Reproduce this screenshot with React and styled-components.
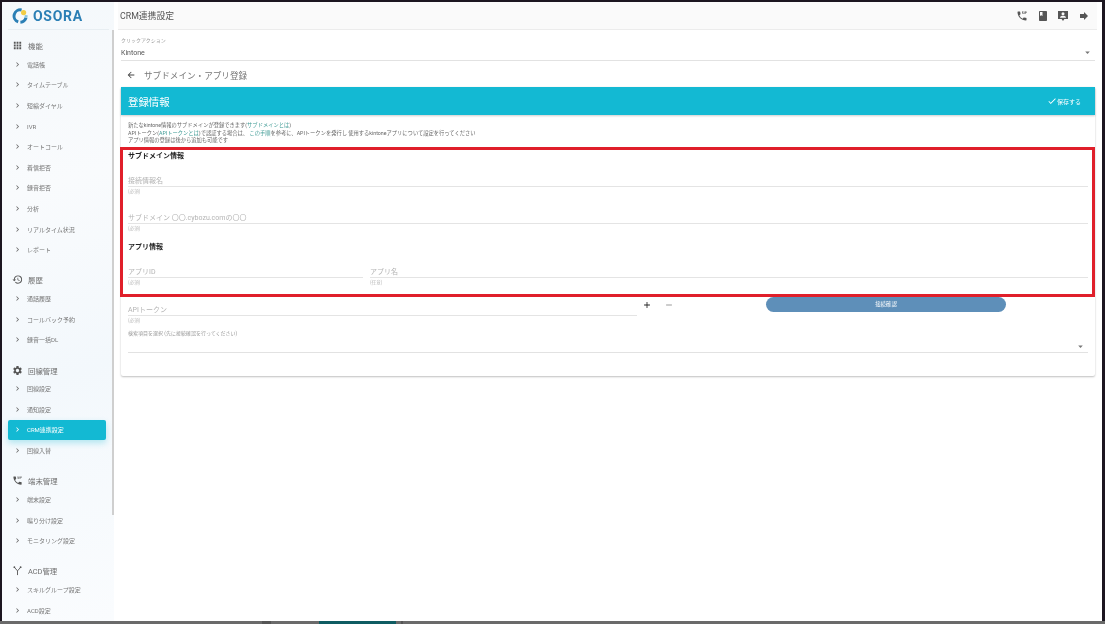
import React from 'react'
import styled, { createGlobalStyle } from 'styled-components'
import {
  MdApps, MdArrowBack, MdArrowDropDown, MdAdd, MdBook, MdCheck, MdChevronRight,
  MdDialerSip, MdForward, MdHistory, MdRemove, MdSettings,
} from 'react-icons/md'

function AcdIcon() {
  return (
    <svg viewBox="0 0 12 12" fill="none" stroke="#555" strokeWidth="1">
      <path d="M3 3 6 6.4 9 3M6 6.4V11" />
      <circle cx="2.6" cy="2.4" r="1" fill="#555" stroke="none" />
      <circle cx="9.4" cy="2.4" r="1" fill="#555" stroke="none" />
    </svg>
  )
}

const groups = [
  { title: '機能', icon: <MdApps />, items: ['電話帳', 'タイムテーブル', '短縮ダイヤル', 'IVR', 'オートコール', '着信拒否', '録音拒否', '分析', 'リアルタイム状況', 'レポート'] },
  { title: '履歴', icon: <MdHistory />, items: ['通話履歴', 'コールバック予約', '録音一括DL'] },
  { title: '回線管理', icon: <MdSettings />, items: ['回線設定', '通知設定', 'CRM連携設定', '回線入替'] },
  { title: '端末管理', icon: <MdDialerSip />, items: ['端末設定', '鳴り分け設定', 'モニタリング設定'] },
  { title: 'ACD管理', icon: <AcdIcon />, items: ['スキルグループ設定', 'ACD設定'] },
]

function Logo() {
  return (
    <svg width="16" height="16" viewBox="0 0 16 16">
      <path d="M9.6 2A6.2 6.2 0 0 0 6.2 13.9" fill="none" stroke="#2b7fb5" strokeWidth="3" />
      <path d="M14 9.6A6.2 6.2 0 0 1 8.4 14.2" fill="none" stroke="#2b7fb5" strokeWidth="3" />
      <path d="M14.2 7.2 14 9.6" fill="none" stroke="#8cc7e0" strokeWidth="3" />
      <circle cx="11.6" cy="4.6" r="2.6" fill="#f2cd45" />
    </svg>
  )
}

function ContactIcon() {
  return (
    <svg width="12" height="12" viewBox="0 0 12 12" fill="#555">
      <path d="M1 1h10v8H7.4L6 11 4.6 9H1z" />
      <circle cx="6" cy="3.8" r="1.5" fill="#fafafa" />
      <path d="M3 7.8c0-1.4 1.6-2 3-2s3 .6 3 2z" fill="#fafafa" />
    </svg>
  )
}

function Field({ label, hint }) {
  return (
    <FieldBox>
      <Placeholder>{label}</Placeholder>
      <Hint>{hint}</Hint>
    </FieldBox>
  )
}

function App() {
  return (
    <Screen>
      <GlobalStyle />
      <Body>
        <Sidebar>
          <Brand>
            <Logo />
            <BrandName>OSORA</BrandName>
          </Brand>
          <Nav>
            {groups.map((group) => (
              <Group key={group.title}>
                <GroupTitle>
                  {group.icon}
                  <span>{group.title}</span>
                </GroupTitle>
                {group.items.map((item) => (
                  <NavItem key={item} $active={item === 'CRM連携設定'}>
                    <MdChevronRight />
                    <span>{item}</span>
                  </NavItem>
                ))}
              </Group>
            ))}
          </Nav>
          <Scrollbar />
        </Sidebar>
        <Main>
          <TopBar>
            <PageTitle>CRM連携設定</PageTitle>
            <TopIcons>
              <MdDialerSip />
              <MdBook />
              <ContactIcon />
              <MdForward />
            </TopIcons>
          </TopBar>
          <Content>
            <ActionSelect>
              <SmallLabel>クリックアクション</SmallLabel>
              <SelectValue>
                Kintone
                <MdArrowDropDown />
              </SelectValue>
            </ActionSelect>
            <BackRow>
              <MdArrowBack />
              <span>サブドメイン・アプリ登録</span>
            </BackRow>
            <Card>
              <CardHeader>
                <CardTitle>登録情報</CardTitle>
                <SaveButton>
                  <MdCheck />
                  保存する
                </SaveButton>
              </CardHeader>
              <CardBody>
                <Notes>
                  <p>新たなkintone情報のサブドメインが登録できます(<NoteLink>サブドメインとは</NoteLink>)</p>
                  <p>APIトークン(<NoteLink>APIトークンとは</NoteLink>)で認証する場合は、 <NoteLink>この手順</NoteLink>を参考に、APIトークンを発行し 使用するkintoneアプリについて設定を行ってください</p>
                  <p>アプリ情報の登録は後から追加も可能です</p>
                </Notes>
                <SectionTitle>サブドメイン情報</SectionTitle>
                <FieldStack>
                  <Field label="接続情報名" hint="(必須)" />
                  <Field label="サブドメイン 〇〇.cybozu.comの〇〇" hint="(必須)" />
                </FieldStack>
                <SectionTitle $second>アプリ情報</SectionTitle>
                <AppRow>
                  <Field label="アプリID" hint="(必須)" />
                  <Field label="アプリ名" hint="(任意)" />
                </AppRow>
                <TokenRow>
                  <TokenField>
                    <Field label="APIトークン" hint="(必須)" />
                  </TokenField>
                  <TokenButtons>
                    <MdAdd />
                    <MinusIcon><MdRemove /></MinusIcon>
                  </TokenButtons>
                  <ConfirmButton>接続確認</ConfirmButton>
                </TokenRow>
                <SearchSelect>
                  <SmallLabel>検索項目を選択 (先に接続確認を行ってください)</SmallLabel>
                  <SearchInput><MdArrowDropDown /></SearchInput>
                </SearchSelect>
              </CardBody>
            </Card>
          </Content>
          <Highlight />
        </Main>
      </Body>
      <TaskStrip>
        <Segment $w={262} />
        <Segment $w={9} $color="#555" />
        <Segment $w={48} />
        <Segment $w={77} $color="#0f5c62" />
        <Segment $w={5} />
        <Segment $w={2} $color="#555" />
        <Segment $grow />
      </TaskStrip>
    </Screen>
  )
}

export default App

const GlobalStyle = createGlobalStyle`
  html, body { margin: 0; padding: 0; background: #1c1620; }
  * { box-sizing: border-box; }
  p { margin: 0; }
  body { font-family: 'Roboto', 'Noto Sans CJK JP', sans-serif; }
`

const Screen = styled.div`
  width: 1105px;
  height: 624px;
  padding: 2px 3px 0 2px;
  background: #1c1620;
  display: flex;
  flex-direction: column;
  overflow: hidden;
  filter: blur(0.4px);
`

const Body = styled.div`
  flex: 1;
  min-height: 0;
  display: flex;
  background: #fff;
`

const Sidebar = styled.aside`
  position: relative;
  width: 112px;
  flex: none;
  overflow: hidden;
  background: linear-gradient(165deg, #f4f8fb 0%, #f9fbfd 30%, #f3f8fc 60%, #fafcfe 100%);
`

const Brand = styled.div`
  height: 28px;
  margin: 0 5px 0 6px;
  padding-left: 4px;
  display: flex;
  align-items: center;
  gap: 5px;
  border-bottom: 1px solid #e8eef2;
`

const BrandName = styled.span`
  font-size: 14px;
  font-weight: 700;
  letter-spacing: 0.7px;
  color: #2b7fb5;
  font-family: 'Roboto', sans-serif;
`

const Nav = styled.nav`
  padding-top: 7px;
`

const Group = styled.div`
  margin-bottom: 11.4px;
`

const GroupTitle = styled.div`
  height: 17px;
  padding-left: 10px;
  display: flex;
  align-items: center;
  gap: 5px;
  font-size: 7.4px;
  color: #6f6f6f;

  svg {
    width: 11px;
    height: 11px;
    color: #555;
  }
`

const NavItem = styled.div`
  height: 20.6px;
  margin: 0 8px 0 6px;
  padding-left: 5px;
  display: flex;
  align-items: center;
  gap: 5px;
  font-size: 6px;
  border-radius: 2px;
  color: ${({ $active }) => ($active ? '#fff' : '#777')};
  background: ${({ $active }) => ($active ? '#13b9d3' : 'transparent')};
  box-shadow: ${({ $active }) => ($active ? '0 3px 6px rgba(19, 185, 211, 0.3)' : 'none')};

  svg {
    width: 9px;
    height: 9px;
    flex: none;
    color: ${({ $active }) => ($active ? '#fff' : '#666')};
  }
`

const Scrollbar = styled.div`
  position: absolute;
  top: 28px;
  right: -2px;
  width: 4px;
  height: 485px;
  background: #cfcfcf;
`

const Main = styled.main`
  position: relative;
  flex: 1;
  min-width: 0;
  display: flex;
  flex-direction: column;
  padding-left: 2px;
`

const TopBar = styled.header`
  height: 28px;
  flex: none;
  margin-left: 2px;
  margin-right: 5px;
  padding: 0 7px 0 2px;
  display: flex;
  align-items: center;
  justify-content: space-between;
  background: #fafafa;
  border-bottom: 1px solid #ececec;
`

const PageTitle = styled.h1`
  margin: 0;
  font-size: 8.8px;
  font-weight: 400;
  color: #555;
`

const TopIcons = styled.div`
  display: flex;
  align-items: center;
  gap: 8.7px;
  color: #555;

  svg {
    width: 12px;
    height: 12px;
  }
`

const Content = styled.div`
  padding: 7px 7px 0 5px;
`

const ActionSelect = styled.div`
  height: 24px;
  border-bottom: 1px solid #e2e2e2;
`

const SmallLabel = styled.div`
  font-size: 5px;
  line-height: 6px;
  color: #999;
`

const SelectValue = styled.div`
  margin-top: 5px;
  height: 9px;
  display: flex;
  align-items: center;
  justify-content: space-between;
  font-size: 7px;
  color: #555;

  svg {
    width: 11px;
    height: 11px;
    margin-right: 2px;
    color: #777;
  }
`

const BackRow = styled.div`
  height: 26px;
  padding: 1px 0 0 5px;
  display: flex;
  align-items: center;
  gap: 8px;
  font-size: 8.6px;
  color: #777;

  svg {
    width: 10px;
    height: 10px;
    color: #444;
  }
`

const Card = styled.section`
  height: 289px;
  background: #fff;
  border-radius: 2px;
  box-shadow: 0 1px 2px rgba(0, 0, 0, 0.25);
`

const CardHeader = styled.div`
  height: 28px;
  padding: 0 14px 0 7px;
  display: flex;
  align-items: center;
  justify-content: space-between;
  background: #13b9d3;
  color: #fff;
  box-shadow: 0 1px 2px rgba(0, 0, 0, 0.2);
`

const CardTitle = styled.h2`
  margin: 0;
  font-size: 10.4px;
  font-weight: 400;
`

const SaveButton = styled.div`
  display: flex;
  align-items: center;
  font-size: 6px;

  svg {
    width: 10px;
    height: 10px;
  }
`

const CardBody = styled.div`
  padding: 7px 7px 0 7px;
`

const Notes = styled.div`
  height: 28.5px;
  font-size: 5.28px;
  line-height: 7.6px;
  color: #666;
`

const NoteLink = styled.span`
  color: #3d9a94;
`

const SectionTitle = styled.h3`
  margin: ${({ $second }) => ($second ? '10.5px' : '0')} 0 0;
  height: 10px;
  font-size: 7px;
  line-height: 10px;
  font-weight: 700;
  color: #222;
`

const FieldStack = styled.div`
  margin-top: 14px;
  display: flex;
  flex-direction: column;
  gap: 17px;
`

const FieldBox = styled.div`
  flex: 1;
  min-width: 0;
`

const Placeholder = styled.div`
  height: 12px;
  font-size: 7px;
  line-height: 12px;
  color: #b4b4b4;
  border-bottom: 1px solid #e4e4e4;
`

const Hint = styled.div`
  height: 8px;
  font-size: 4.6px;
  line-height: 9px;
  color: #bbb;
`

const AppRow = styled.div`
  margin-top: 13.5px;
  display: flex;
  gap: 7px;

  > :first-child {
    flex: none;
    width: 235px;
  }
`

const TokenRow = styled.div`
  margin-top: 11.5px;
  display: flex;
  align-items: flex-start;
`

const TokenField = styled.div`
  width: 509px;
  margin-top: 6.5px;
`

const TokenButtons = styled.div`
  width: 129px;
  margin-top: 3px;
  padding-left: 5px;
  display: flex;
  align-items: center;
  gap: 12px;
  color: #222;

  svg {
    width: 10px;
    height: 10px;
  }
`

const MinusIcon = styled.span`
  display: flex;
  color: #888;
`

const ConfirmButton = styled.div`
  width: 240px;
  height: 15px;
  border-radius: 8px;
  background: #5e8fb9;
  color: #fff;
  font-size: 5.4px;
  line-height: 14px;
  text-align: center;
`

const SearchSelect = styled.div`
  margin-top: 6.5px;
`

const SearchInput = styled.div`
  height: 17px;
  display: flex;
  align-items: flex-end;
  justify-content: flex-end;
  border-bottom: 1px solid #e2e2e2;

  svg {
    width: 11px;
    height: 11px;
    color: #777;
    margin-right: 2px;
  }
`

const Highlight = styled.div`
  position: absolute;
  left: 5.5px;
  top: 145px;
  width: 975.5px;
  height: 149.5px;
  border: 3px solid #e01f2a;
  pointer-events: none;
`

const TaskStrip = styled.div`
  height: 3px;
  flex: none;
  margin: 0 -3px 0 -2px;
  display: flex;
  background: #6a6a6a;
`

const Segment = styled.div`
  width: ${({ $w }) => ($w ? `${$w}px` : 'auto')};
  flex: ${({ $grow }) => ($grow ? 1 : 'none')};
  background: ${({ $color }) => $color || '#6a6a6a'};
`
